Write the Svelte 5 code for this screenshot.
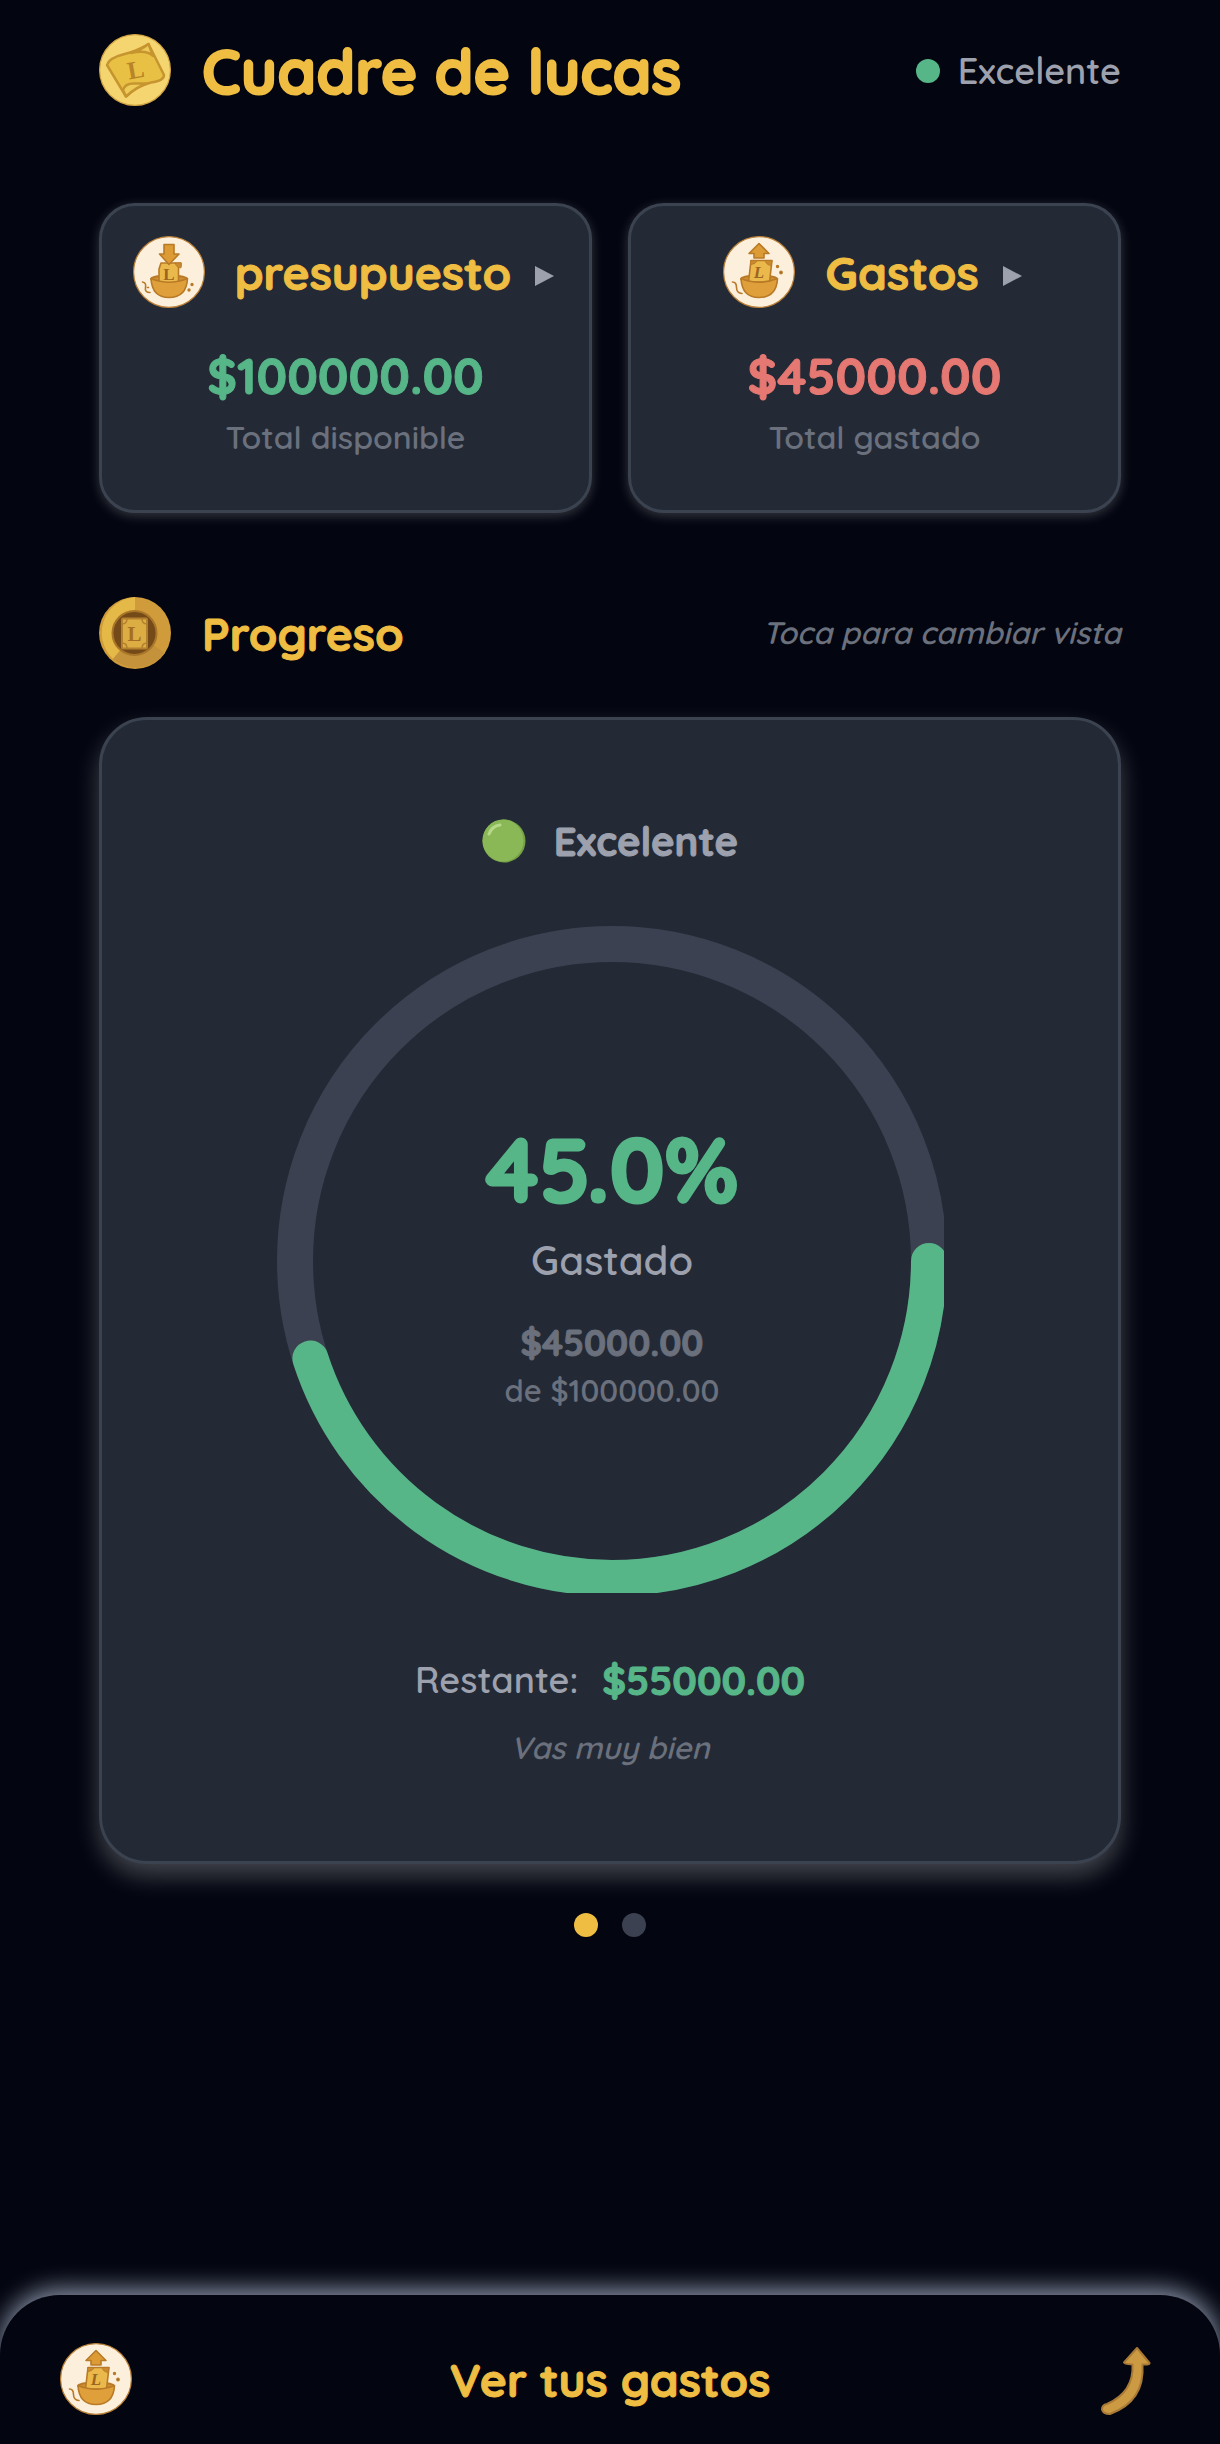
<script>
  const spent = 45000;
  const budget = 100000;
  const ratio = spent / budget;
  const money = (n) => '$' + n.toFixed(2);
  const circumference = 2 * Math.PI * 317;
  let view = $state(0);
</script>

{#snippet bowl(up)}
  <svg class="icon" viewBox="0 0 72 72" aria-hidden="true">
    <circle cx="36" cy="36" r="35.4" fill="#fcf0dc" stroke="#bb8038" stroke-width="1.2" />
    <g stroke="#b97a27" stroke-width="1.6" stroke-linejoin="round" stroke-linecap="round">
      <ellipse cx="36" cy="43" rx="18" ry="3.4" fill="#cf8f30" />
      {#if up}
        <path d="M28 24.500H49L46.500 46H25.500Z" fill="#ebb94b" />
        <path d="M28 24.500h6.500q-2 4-6.500 4ZM42 24.500h7l-1 5q-5-.5-6-5Z" fill="#c98a2f" stroke-width=".8" />
        <path d="M36 7.500 46 17.500H41V22H31v-4.500H26Z" fill="#dd9b35" />
      {:else}
        <path d="M28 27h20v3l-2.500 1V47H26V33Z" fill="#ebb94b" />
        <path d="M42 27h6v5q-5-.5-6-5Z" fill="#c98a2f" stroke-width=".8" />
        <path d="M31 8.500H41v9.500h5L36 28.500 26.500 18H31Z" fill="#dd9b35" />
      {/if}
      <path d="M18 42.500Q36 50 54.500 42.500 53.500 61.500 36 61.500 19 61.500 18 42.500Z" fill="#dfa03b" />
      {#if up}
        <path d="M9.500 46q4 0 4 5.500t5.500 6" fill="none" />
        <circle cx="54.500" cy="30.500" r=".9" /><circle cx="58" cy="36.500" r="1.1" />
      {:else}
        <path d="M9.500 46q4 .5 3 5.500t4.500 5M14.500 51.500l1 0" fill="none" />
        <circle cx="59" cy="48.500" r=".9" /><circle cx="56" cy="54" r=".9" />
      {/if}
    </g>
    <text x="36" y={up ? 42 : 44} text-anchor="middle" font-size="17" font-weight="700" font-style={up ? 'italic' : 'normal'} fill="#9c6520">L</text>
  </svg>
{/snippet}

<main>
  <header class="top">
    <svg class="icon" viewBox="0 0 72 72" aria-hidden="true">
      <circle cx="36" cy="36" r="35.400" fill="#f5d570" stroke="#d3a646" stroke-width="1.200" />
      <g stroke="#c6952f" stroke-width="2.500" stroke-linejoin="round" stroke-linecap="round">
        <path d="M8 31Q10 24 24 20.500Q38 17 49.500 10L65 41Q65 47 52 48.500Q38 52 27 62.500Z" fill="#e8c144" />
        <path d="M32 19Q48 15.500 54 22L49.500 10Q42 16 32 19Z" fill="#eccb58" />
        <path d="M24 56Q26 49 36 49.500L48 49.500Q37 53 27 62.500Z" fill="#eccb58" />
      </g>
      <text x="37" y="44" text-anchor="middle" font-size="25" font-weight="700" fill="#b98428" transform="rotate(-10 38 37)">L</text>
    </svg>
    <h1>Cuadre de lucas</h1>
    <p class="status"><span class="status-dot"></span>Excelente</p>
  </header>

  <section class="cards">
    <button class="card">
      <span class="card-head">{@render bowl(false)}<span class="name">presupuesto</span><span class="play"></span></span>
      <span class="amount good">{money(budget)}</span>
      <span class="small">Total disponible</span>
    </button>
    <button class="card">
      <span class="card-head">{@render bowl(true)}<span class="name">Gastos</span><span class="play"></span></span>
      <span class="amount bad">{money(spent)}</span>
      <span class="small">Total gastado</span>
    </button>
  </section>

  <header class="section-head">
    <svg class="icon" viewBox="0 0 72 72" aria-hidden="true">
      <circle cx="36" cy="36" r="36" fill="#cf9b3b" />
      <path d="M36 0A36 36 0 0 0 14 62L36 36Z" fill="#e5b947" />
      <path d="M14 62A36 36 0 0 0 66 56L36 36Z" fill="#c4923a" />
      <circle cx="35.500" cy="36" r="22" fill="#744a18" stroke="#a87529" stroke-width="2" />
      <rect x="23" y="21.500" width="25" height="30" rx="1" fill="#dcad42" stroke="#b3802e" stroke-width="2" />
      <path d="M23 27q5 0 5-5.500M48 27q-5 0-5-5.500M23 46q5 0 5 5.500M48 46q-5 0-5 5.500" fill="none" stroke="#b3802e" stroke-width="1.500" />
      <text x="35.500" y="43.500" text-anchor="middle" font-size="21" font-weight="700" fill="#a56e25">L</text>
    </svg>
    <h2>Progreso</h2>
    <p class="hint">Toca para cambiar vista</p>
  </header>

  <section class="panel">
    <p class="mood">
      <svg class="ball" viewBox="0 0 44 44" aria-hidden="true">
        <circle cx="22" cy="22" r="21.500" fill="#75a046" />
        <ellipse cx="21" cy="21.500" rx="20.500" ry="21" fill="#8bb856" />
        <path d="M7 15Q10 7 18 6" fill="none" stroke="#b5d988" stroke-width="3" stroke-linecap="round" />
      </svg>
      Excelente
    </p>
    <div class="gauge">
      <svg viewBox="0 0 668 668" aria-hidden="true">
        <circle cx="336" cy="336" r="317" fill="none" stroke="#3b4150" stroke-width="36" />
        <circle cx="336" cy="336" r="317" fill="none" stroke="#56b688" stroke-width="36" stroke-linecap="round" stroke-dasharray="{circumference * ratio} {circumference}" />
      </svg>
      <div class="reading">
        <strong class="percent">{(ratio * 100).toFixed(1)}%</strong>
        <span class="spent">Gastado</span>
        <strong class="sum">{money(spent)}</strong>
        <span class="small">de {money(budget)}</span>
      </div>
    </div>
    <p class="rest">Restante: <strong>{money(budget - spent)}</strong></p>
    <p class="hint">Vas muy bien</p>
  </section>

  <nav class="dots">
    <button class:on={view === 0} aria-label="Vista 1" onclick={() => (view = 0)}></button>
    <button class:on={view === 1} aria-label="Vista 2" onclick={() => (view = 1)}></button>
  </nav>
</main>

<button class="sheet">
  {@render bowl(true)}
  <span class="name">Ver tus gastos</span>
  <svg class="icon" viewBox="0 0 72 72" aria-hidden="true">
    <path d="M49 5 61.500 20Q62 22 54.500 21.500Q57 58 22 71Q15 71 14 66.500Q14 62 19 61Q46 49 44.500 21.500Q36 21 36 19.500Z" fill="#cb9a43" stroke="#a97a36" stroke-width="2" stroke-linejoin="round" />
  </svg>
</button>

<style>
  :global(html), :global(body), :global(#app) { height: 100%; }
  :global(body) { margin: 0; background: #030510; }
  :global(#app) {
    display: flex;
    flex-direction: column;
    font-family: Quicksand, Lato, sans-serif;
    font-weight: 600;
  }
  main { flex: 1 0 auto; padding: 34px 99px 0; }
  h1, h2, p { margin: 0; }
  button { font: inherit; border: 0; padding: 0; margin: 0; cursor: pointer; }
  svg { display: block; }
  svg text { font-family: 'Liberation Serif', serif; }
  .icon { width: 72px; height: 72px; flex: none; }
  .top, .section-head { display: flex; align-items: center; }
  h1 { margin-left: 31px; padding-top: 2px; font-size: 62px; line-height: 72px; color: #efbd42; -webkit-text-stroke: 2px currentColor; }
  .top { height: 72px; }
  .status { margin-left: auto; display: flex; align-items: center; gap: 18px; padding-top: 2px; font-size: 36px; line-height: 48px; color: #9da1ae; }
  .status-dot { width: 24px; height: 24px; border-radius: 50%; background: #56b688; }
  .cards { display: grid; grid-template-columns: repeat(2, minmax(0, 1fr)); gap: 36px; margin-top: 97px; }
  .card {
    display: flex; flex-direction: column; align-items: center;
    padding: 30px 27px 53px;
    background: #232a36; border: 3px solid #3b4351; border-radius: 36px;
    box-shadow: 0 3px 12px rgba(255, 255, 255, 0.2);
  }
  .card-head { display: flex; align-items: center; }
  .name, h2 { padding-top: 2px; font-size: 46px; line-height: 56px; font-weight: 700; color: #efbd42; }
  .name, h2, .amount, .mood, .sum, .rest strong { -webkit-text-stroke: 1px currentColor; }
  .card .name { margin: 0 24px 0 30px; }
  .play { margin: 8px 4px 0 0; border-left: 19px solid #9da1ae; border-top: 10px solid transparent; border-bottom: 10px solid transparent; }
  .amount { margin-top: 36px; font-size: 50px; line-height: 64px; font-weight: 700; }
  .good { color: #56b688; }
  .bad { color: #e57872; }
  .small { margin-top: 9px; font-size: 32px; line-height: 40px; color: #6b707d; }
  .section-head { margin-top: 84px; }
  h2 { margin-left: 31px; }
  .section-head .hint { margin-left: auto; }
  .hint { font-size: 31px; line-height: 40px; font-style: italic; color: #6b707d; }
  .panel {
    display: flex; flex-direction: column; align-items: center;
    margin-top: 48px; padding: 95px 48px 93px;
    background: #232a36; border: 3px solid #3b4351; border-radius: 48px;
    box-shadow: 0 12px 24px rgba(255, 255, 255, 0.25);
  }
  .mood { display: flex; align-items: center; gap: 28px; font-size: 40px; line-height: 52px; font-weight: 700; color: #9da1ae; }
  .ball { width: 44px; height: 44px; }
  .gauge { display: grid; width: 100%; max-width: 668px; margin-top: 58px; }
  .gauge > * { grid-area: 1 / 1; }
  .gauge svg { width: 100%; }
  .reading { display: flex; flex-direction: column; align-items: center; justify-content: center; padding: 6px 0 0 4px; }
  .percent { font-size: 90px; line-height: 112px; color: #56b688; -webkit-text-stroke: 3px currentColor; }
  .spent { margin-top: 9px; font-size: 40px; line-height: 52px; color: #9da1ae; }
  .sum { margin-top: 33px; font-size: 36px; line-height: 48px; color: #6b707d; }
  .reading .small { margin-top: 4px; font-size: 31px; }
  .rest { display: flex; align-items: center; gap: 24px; margin-top: 61px; font-size: 36px; line-height: 52px; color: #9da1ae; }
  .rest strong { font-size: 40px; color: #56b688; }
  .panel .hint { margin-top: 22px; }
  .dots { display: flex; justify-content: center; gap: 24px; margin-top: 49px; padding-bottom: 48px; }
  .dots button { width: 24px; height: 24px; border-radius: 50%; background: #3b4150; }
  .dots button.on { background: #efbd42; }
  .sheet {
    display: flex; align-items: center; justify-content: space-between;
    width: 100%; padding: 48px 60px 29px;
    background: #030510; border-radius: 60px 60px 0 0;
    box-shadow: 0 -6px 24px #8b95a8;
  }
</style>
